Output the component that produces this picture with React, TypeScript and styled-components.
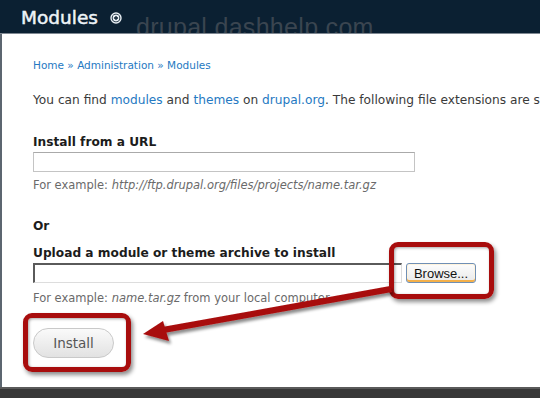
import React from "react";
import styled, { createGlobalStyle } from "styled-components";

const GlobalStyle = createGlobalStyle`
  html, body {
    margin: 0;
    padding: 0;
    background: #fff;
  }
  body {
    width: 540px;
    height: 398px;
    overflow: hidden;
    font-family: "DejaVu Sans", Verdana, sans-serif;
  }
`;

const Page = styled.div`
  position: relative;
  display: flex;
  flex-direction: column;
  width: 540px;
  height: 398px;
  overflow: hidden;
`;

const Header = styled.header`
  height: 33px;
  flex: none;
  display: flex;
  align-items: flex-end;
  gap: 12px;
  padding-left: 21px;
  background: #0b2032;
  border-bottom: 1px solid #7f8892;
  overflow: hidden;
`;

const Title = styled.h1`
  margin: 0 0 5px;
  font-size: 18.5px;
  font-weight: normal;
  -webkit-text-stroke: 0.5px #eef3f7;
  color: #eef3f7;
`;

const AddIcon = styled.span`
  display: flex;
  margin-bottom: 9px;
`;

const Watermark = styled.span`
  margin: 0 0 -9px 2px;
  font-family: "Liberation Sans", Arial, sans-serif;
  font-size: 25px;
  color: #3a4550;
  letter-spacing: 0.3px;
`;

const Main = styled.main`
  flex: 1;
  padding: 25px 0 0 31px;
  border-left: 2px solid #5c6670;
  background: #fff;
  font-size: 12px;
  color: #3a3a3a;
  white-space: nowrap;
  overflow: hidden;
`;

const Link = styled.a`
  color: #2579c2;
  text-decoration: none;
`;

const Breadcrumb = styled.div`
  font-size: 10.5px;
  color: #2579c2;
  margin-bottom: 22px;
`;

const Intro = styled.p`
  margin: 0 0 28px;
  font-size: 12.2px;
`;

const Label = styled.label`
  display: block;
  font-weight: bold;
  font-size: 12.2px;
  color: #1c1c1c;
  margin-bottom: 3px;
`;

const TextInput = styled.div`
  width: 380px;
  height: 18px;
  border: 1px solid #c4c4c4;
  border-top-color: #aaa;
`;

const Hint = styled.div<{ $gap?: number }>`
  margin-top: ${(p) => p.$gap ?? 6}px;
  font-size: 11.5px;
  color: #6a6a6a;

  em {
    font-style: italic;
  }
`;

const Or = styled.div`
  margin: 27px 0 13px;
  font-weight: bold;
  font-size: 12.2px;
  color: #1c1c1c;
`;

const FileRow = styled.div`
  display: flex;
  align-items: center;
  gap: 4px;
`;

const FileField = styled.div`
  width: 366px;
  height: 17px;
  border: 1px solid #ddd;
  border-top: 2px solid #5a5a5a;
  border-left: 2px solid #5a5a5a;
`;

const BrowseButton = styled.button`
  width: 70px;
  height: 20px;
  padding: 0;
  font-family: "Liberation Sans", Arial, sans-serif;
  font-size: 13px;
  color: #111;
  border: 1px solid #6f8fb5;
  border-radius: 3px;
  background: linear-gradient(#fdfdfd, #e9e9e9);
  box-shadow: inset 0 -2px 0 #f4b04a, inset 0 0 0 1px #fff3dc;
`;

const InstallButton = styled.button`
  margin-top: 23px;
  width: 81px;
  height: 30px;
  padding: 0;
  font-family: "DejaVu Sans", Verdana, sans-serif;
  font-size: 13.5px;
  color: #555;
  border: 1px solid #c9c9c9;
  border-radius: 15px;
  background: linear-gradient(#fafafa, #e2e2e2);
`;

const Footer = styled.footer`
  height: 9px;
  flex: none;
  background: #383838;
  border-top: 2px solid #5a5a5a;
`;

const Callout = styled.div<{ $x: number; $y: number; $w: number; $h: number }>`
  position: absolute;
  left: ${(p) => p.$x}px;
  top: ${(p) => p.$y}px;
  width: ${(p) => p.$w}px;
  height: ${(p) => p.$h}px;
  box-sizing: border-box;
  border: 5px solid #a80d0d;
  border-radius: 9px;
  box-shadow: 2px 3px 4px rgba(0, 0, 0, 0.45),
    inset 1px 1px 3px rgba(0, 0, 0, 0.35);
  pointer-events: none;
`;

const ArrowLayer = styled.svg`
  position: absolute;
  left: 0;
  top: 0;
  pointer-events: none;
`;

const App = () => (
  <>
    <GlobalStyle />
    <Page>
      <Header>
        <Title>Modules</Title>
        <AddIcon>
          <svg width="12" height="12" viewBox="0 0 12 12">
            <circle cx="6" cy="6" r="5" fill="#0b2032" stroke="#e8eef3" strokeWidth="1.4" />
            <circle cx="6" cy="6" r="3.4" fill="#e8eef3" />
            <path d="M6 4v4M4 6h4" stroke="#0b2032" strokeWidth="1.3" />
          </svg>
        </AddIcon>
        <Watermark>drupal.dashhelp.com</Watermark>
      </Header>

      <Main>
        <Breadcrumb>
          <Link href="#">Home</Link> » <Link href="#">Administration</Link> »{" "}
          <Link href="#">Modules</Link>
        </Breadcrumb>

        <Intro>
          You can find <Link href="#">modules</Link> and{" "}
          <Link href="#">themes</Link> on <Link href="#">drupal.org</Link>. The
          following file extensions are supported: tar tgz gz bz2
        </Intro>

        <Label>Install from a URL</Label>
        <TextInput />
        <Hint>
          For example: <em>http://ftp.drupal.org/files/projects/name.tar.gz</em>
        </Hint>

        <Or>Or</Or>

        <Label>Upload a module or theme archive to install</Label>
        <FileRow>
          <FileField />
          <BrowseButton>Browse...</BrowseButton>
        </FileRow>
        <Hint $gap={8}>
          For example: <em>name.tar.gz</em> from your local computer
        </Hint>

        <InstallButton>Install</InstallButton>
      </Main>

      <Footer />

      <Callout $x={389} $y={242} $w={105} $h={57} />
      <Callout $x={23} $y={313} $w={108} $h={59} />

      <ArrowLayer width="540" height="398" viewBox="0 0 540 398">
        <defs>
          <filter id="shadow" x="-10%" y="-30%" width="130%" height="170%">
            <feDropShadow dx="2" dy="3" stdDeviation="1.6" floodColor="#000" floodOpacity="0.45" />
          </filter>
        </defs>
        <g filter="url(#shadow)" fill="#a80d0d">
          <path d="M390 286 L392 292 L164 333 L162 327 Z" />
          <path d="M143 334 L163 321 L169 341 Z" />
        </g>
      </ArrowLayer>
    </Page>
  </>
);

export default App;
